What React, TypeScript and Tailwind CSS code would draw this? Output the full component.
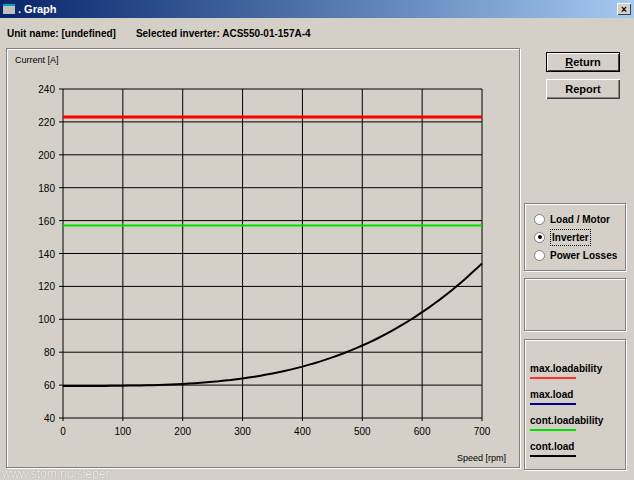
import React from "react";

const F = { fontFamily: '"Liberation Sans", Arial, sans-serif' };

function Chart() {
  const x0 = 62, x1 = 481, y0 = 88, y1 = 417;
  const sx = (v: number) => x0 + (v / 700) * (x1 - x0);
  const sy = (v: number) => y1 - ((v - 40) / 200) * (y1 - y0);
  const pts: string[] = [];
  for (let s = 0; s <= 700; s += 10) {
    const c = 59.5 + 74.5 * Math.pow(s / 700, 3.3);
    pts.push(`${sx(s).toFixed(1)},${sy(c).toFixed(1)}`);
  }
  const ys = [40, 60, 80, 100, 120, 140, 160, 180, 200, 220, 240];
  const xs = [0, 100, 200, 300, 400, 500, 600, 700];
  return (
    <svg width="514" height="420" viewBox="6 48 514 420" className="absolute left-0 top-0" style={F}>
      {ys.map((v) => (
        <g key={v}>
          <line x1={x0 - 4} x2={x1} y1={sy(v)} y2={sy(v)} stroke="#000" strokeWidth="1" />
          <text x={x0 - 8} y={sy(v) + 4} fontSize="10" textAnchor="end" fill="#000">{v}</text>
        </g>
      ))}
      {xs.map((v) => (
        <g key={v}>
          <line x1={sx(v)} x2={sx(v)} y1={y0} y2={y1 + 3} stroke="#000" strokeWidth="1" />
          <text x={sx(v)} y={y1 + 17} fontSize="10" textAnchor="middle" fill="#000">{v}</text>
        </g>
      ))}
      <line x1={x0} x2={x1} y1={sy(223)} y2={sy(223)} stroke="#ff0000" strokeWidth="3" />
      <line x1={x0} x2={x1} y1={sy(157)} y2={sy(157)} stroke="#00e000" strokeWidth="2" />
      <polyline points={pts.join(" ")} fill="none" stroke="#000" strokeWidth="2" />
      <text x="14" y="62" fontSize="9" fill="#000">Current [A]</text>
      <text x="505" y="460" fontSize="9" textAnchor="end" fill="#000">Speed [rpm]</text>
    </svg>
  );
}

function Btn({ label, u, def }: { label: string; u: string; def?: boolean }) {
  return (
    <div className={`w-[74px] h-[20px] bg-[#d4d0c8] flex items-center justify-center text-[11px] font-bold text-black ${def ? "border border-black shadow-[inset_1px_1px_0_#fff,inset_-1px_-1px_0_#404040]" : "shadow-[inset_1px_1px_0_#fff,inset_-1px_-1px_0_#404040,inset_-2px_-2px_0_#808080]"}`}>
      <span><span className="underline">{u}</span>{label}</span>
    </div>
  );
}

function Radio({ label, on }: { label: string; on?: boolean }) {
  return (
    <div className="flex items-center gap-[5px] text-[10px] font-bold text-black h-[18px]">
      <div className="w-[11px] h-[11px] rounded-full bg-white border border-[#808080] flex items-center justify-center">
        {on && <div className="w-[4px] h-[4px] rounded-full bg-black" />}
      </div>
      <span className={on ? "border border-dotted border-black px-[1px]" : ""}>{label}</span>
    </div>
  );
}

function Leg({ label, color }: { label: string; color: string }) {
  return (
    <div className="h-[24px] flex flex-col justify-center">
      <span className="text-[10px] font-bold text-black leading-[12px]">{label}</span>
      <div className="w-[46px] h-[2px] mt-[2px]" style={{ background: color }} />
    </div>
  );
}

const Box = "border border-[#808080] shadow-[1px_1px_0_#fff,inset_1px_1px_0_#fff]";

export default function App() {
  return (
    <div className="w-[634px] h-[480px] bg-[#d4d0c8] relative overflow-hidden" style={F}>
      <div className="h-[18px] flex items-center px-[3px] gap-[3px] bg-gradient-to-r from-[#0a246a] to-[#a6caf0]">
        <div className="w-[12px] h-[10px] bg-[#c0c0c0] border-t-2 border-[#00a0c0]" />
        <span className="text-white text-[11px] font-bold">. Graph</span>
        <div className="ml-auto w-[14px] h-[12px] bg-[#d4d0c8] flex items-center justify-center text-[10px] font-bold shadow-[inset_1px_1px_0_#fff,inset_-1px_-1px_0_#404040]">×</div>
      </div>
      <div className="flex gap-[20px] text-[10px] font-bold text-black px-[7px] h-[30px] items-center">
        <span>Unit name: [undefined]</span>
        <span>Selected inverter: ACS550-01-157A-4</span>
      </div>
      <div className="flex px-[6px] gap-[4px]">
        <div className={`w-[514px] h-[420px] relative ${Box}`}>
          <Chart />
        </div>
        <div className="w-[102px] flex flex-col items-center">
          <div className="flex flex-col gap-[7px] mt-[4px] ml-[16px]">
            <Btn u="R" label="eturn" def />
            <Btn u="" label="Report" />
          </div>
          <div className={`w-[102px] h-[68px] mt-[104px] ${Box} flex flex-col justify-center pl-[9px]`}>
            <Radio label="Load / Motor" />
            <Radio label="Inverter" on />
            <Radio label="Power Losses" />
          </div>
          <div className={`w-[102px] h-[53px] mt-[7px] ${Box}`} />
          <div className={`w-[102px] h-[131px] mt-[8px] ${Box} flex flex-col justify-end pl-[5px] pb-[8px] gap-[2px]`}>
            <Leg label="max.loadability" color="#ff3030" />
            <Leg label="max.load" color="#000080" />
            <Leg label="cont.loadability" color="#00e000" />
            <Leg label="cont.load" color="#000" />
          </div>
        </div>
      </div>
      <div className="absolute left-[2px] top-[465px] text-[12px] text-[#eeeeee] [text-shadow:0_0_1px_#888]">www.stom.nu/sleper</div>
    </div>
  );
}
